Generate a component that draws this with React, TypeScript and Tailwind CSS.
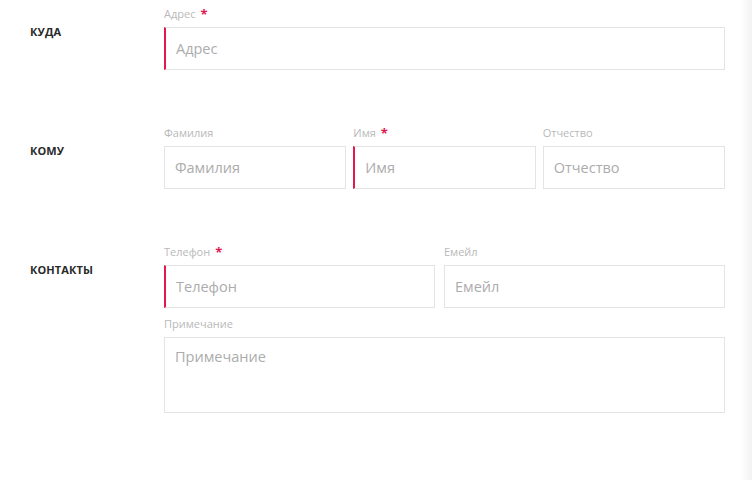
import React from "react";

function Label({ text, required }: { text: string; required?: boolean }) {
  return (
    <div className="h-4 flex items-center text-[11px] text-[#b9b9b9] mb-[5px]">
      {text}
      {required && <span className="ml-[5px] text-[#e3184f] text-[13px] font-bold leading-none">*</span>}
    </div>
  );
}

function Field({
  label,
  required,
  className,
}: {
  label: string;
  required?: boolean;
  className?: string;
}) {
  return (
    <div className={className}>
      <Label text={label} required={required} />
      <div
        className={
          "h-[43px] flex items-center bg-white border border-[#e4e4e4] px-[10px] text-[14.5px] text-[#acacac] " +
          (required ? "border-l-2 border-l-[#e3184f]" : "")
        }
      >
        {label}
      </div>
    </div>
  );
}

function Section({ title, children }: { title: string; children: React.ReactNode }) {
  return (
    <div className="flex">
      <div className="w-[164px] shrink-0 pl-[30px] pt-[18px] text-[11px] font-bold text-[#2a2a2a] tracking-[0.1px]">
        {title}
      </div>
      <div className="flex-1">{children}</div>
    </div>
  );
}

export default function App() {
  return (
    <div
      className="relative w-[752px] h-[480px] bg-white overflow-hidden"
      style={{ fontFamily: '"Open Sans", "Noto Sans", sans-serif' }}
    >
      <div className="absolute top-0 right-0 w-[12px] h-full bg-gradient-to-r from-white to-[#f3f3f3]" />
      <div className="w-[725px] pt-[6px] flex flex-col">
        <Section title="КУДА">
          <Field label="Адрес" required />
        </Section>

        <div className="mt-[55px]">
          <Section title="КОМУ">
            <div className="grid grid-cols-3 gap-[7px]">
              <Field label="Фамилия" />
              <Field label="Имя" required />
              <Field label="Отчество" />
            </div>
          </Section>
        </div>

        <div className="mt-[55px]">
          <Section title="КОНТАКТЫ">
            <div className="grid grid-cols-[271px_1fr] gap-[9px]">
              <Field label="Телефон" required />
              <Field label="Емейл" />
            </div>
            <div className="mt-[8px]">
              <Label text="Примечание" />
              <div className="h-[76px] bg-white border border-[#e4e4e4] px-[10px] pt-[8px] text-[14.5px] text-[#acacac]">
                Примечание
              </div>
            </div>
          </Section>
        </div>
      </div>
    </div>
  );
}
